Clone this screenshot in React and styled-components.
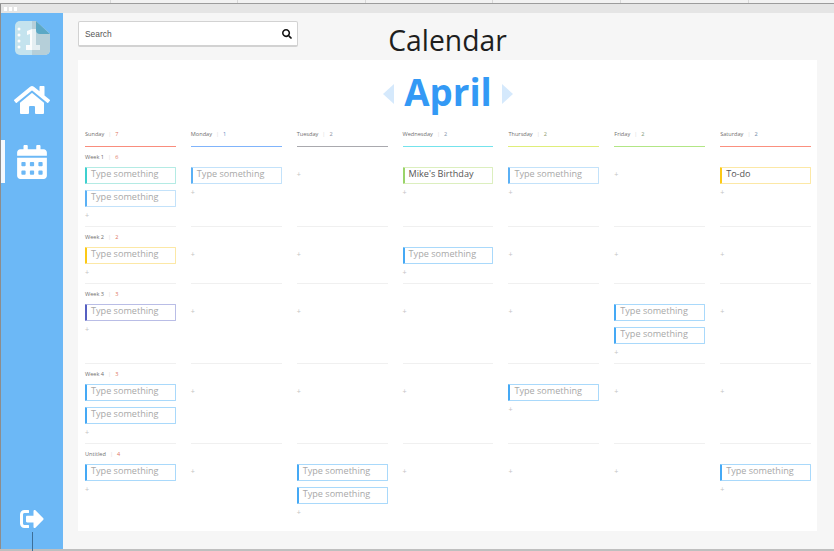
import styled, { createGlobalStyle } from 'styled-components'
import { FaHome, FaCalendarAlt, FaSignOutAlt, FaSearch } from 'react-icons/fa'

const GlobalStyle = createGlobalStyle`
* {
  box-sizing: border-box;
  margin: 0;
  padding: 0;
}
html, body, #root {
  height: 100%;
}
body {
  overflow: hidden;
  font-family: 'Open Sans', sans-serif;
  background: #f6f6f6;
}
`

const Frame = styled.div`
  position: relative;
  height: 551px;
  display: flex;
  flex-direction: column;
  border-left: 1px solid #8d8d8d;
`
const Ruler = styled.div`
  height: 4px;
  flex: none;
  margin-left: -1px;
  border-bottom: 1px solid #9c9c9c;
  background: repeating-linear-gradient(to right, #f2f2f2 0, #f2f2f2 126.6px, #d8d8d8 126.6px, #d8d8d8 127.6px) -17px 0;
`
const TitleBar = styled.div`
  height: 9px;
  flex: none;
  display: flex;
  align-items: center;
  gap: 2px;
  padding-left: 3px;
  background: #e5e5e5;
`
const Dot = styled.span`
  width: 3px;
  height: 4px;
  background: #fff;
`
const Body = styled.div`
  flex: 1;
  min-height: 0;
  display: flex;
`
const BottomEdge = styled.div`
  height: 2px;
  flex: none;
  margin-left: -1px;
  background: #bfbfbf;
`
const Sidebar = styled.nav`
  width: 62px;
  flex: none;
  display: flex;
  flex-direction: column;
  align-items: center;
  padding-top: 8px;
  background: #6cb8f6;
  color: #fff;
`
const NavItem = styled.div`
  position: relative;
  width: 100%;
  height: ${p => p.$h}px;
  margin-top: ${p => p.$mt || 0}px;
  margin-bottom: ${p => p.$mb || 0}px;
  display: flex;
  align-items: center;
  justify-content: center;
  &::before {
    content: '';
    display: ${p => (p.$active ? 'block' : 'none')};
    position: absolute;
    left: 0;
    top: 0;
    bottom: 0;
    width: 4px;
    background: #f4f9fe;
  }
`
const Spacer = styled.div`
  flex: 1;
`
const Cable = styled.div`
  position: absolute;
  left: 31px;
  top: 532px;
  bottom: 0;
  width: 1px;
  background: #3d6f99;
`
const Main = styled.main`
  flex: 1;
  min-width: 0;
  display: flex;
  flex-direction: column;
  padding: 8px 17px 18px 15px;
`
const TopRow = styled.header`
  height: 39px;
  flex: none;
  display: grid;
  grid-template-columns: 1fr auto 1fr;
  align-items: start;
`
const SearchBox = styled.div`
  width: 220px;
  height: 26px;
  display: flex;
  align-items: center;
  justify-content: space-between;
  padding: 0 5px 0 6px;
  background: #fff;
  border: 1px solid #d2d2d2;
  border-bottom-width: 2px;
  border-radius: 2px;
  font-family: 'Liberation Sans', sans-serif;
  font-size: 8.4px;
  color: #555;
  svg {
    color: #111;
  }
`
const Title = styled.h1`
  font-size: 28.3px;
  line-height: 38px;
  font-weight: 400;
  color: #1e1e1e;
`
const Panel = styled.section`
  flex: 1;
  min-height: 0;
  padding: 0 6px 0 7px;
  background: #fff;
`
const MonthRow = styled.div`
  height: 67px;
  display: flex;
  align-items: center;
  justify-content: center;
  gap: 10px;
`
const Month = styled.h2`
  font-size: 36.7px;
  line-height: 62px;
  margin-bottom: 4px;
  font-weight: 700;
  color: #3399f5;
`
const Arrow = styled.span`
  width: 0;
  height: 0;
  border-top: 10px solid transparent;
  border-bottom: 10px solid transparent;
  border-${p => (p.$right ? 'left' : 'right')}: 11px solid #d5e9fc;
`
const DayGrid = styled.div`
  display: grid;
  grid-template-columns: repeat(7, 1fr);
  column-gap: 15px;
`
const DayHead = styled.div`
  height: 20px;
  display: flex;
  align-items: flex-start;
  padding-top: 2px;
  border-bottom: 1px solid ${p => p.$color};
`
const Count = styled.div`
  display: flex;
  align-items: center;
  font-size: 5.6px;
  line-height: 11px;
  color: #6f6f6f;
  i {
    font-style: normal;
    color: #d8d8d8;
    margin: 0 4px;
  }
  b {
    font-weight: 400;
    color: ${p => p.$tone};
  }
`
const WeekLabel = styled(Count)`
  grid-column: 1 / -1;
  height: 20px;
  padding-top: 5px;
  align-items: flex-start;
`
const Cell = styled.div`
  display: flex;
  flex-direction: column;
  gap: 6px;
  border-bottom: 1px solid ${p => (p.$last ? 'transparent' : '#f0f0f0')};
`
const Card = styled.div`
  height: 17px;
  padding-left: 4px;
  background: #fff;
  border: 1px solid ${p => p.$tint};
  border-left: 2px solid ${p => p.$accent};
  border-radius: 1px;
  font-size: 9.1px;
  line-height: 11px;
  white-space: nowrap;
  color: ${p => (p.$filled ? '#555' : '#a8a8a8')};
`
const AddButton = styled.div`
  height: 18px;
  margin-top: ${p => (p.$empty ? 0 : -5)}px;
  padding-top: 3px;
  font-family: 'Liberation Sans', sans-serif;
  font-size: 7px;
  line-height: 10px;
  color: #c4c4c4;
`

const Logo = () => (
  <svg width="35" height="35" viewBox="0 0 35 35">
    <path d="M5 0H21L35 13V29a5 5 0 0 1-5 5H5a5 5 0 0 1-5-5V5a5 5 0 0 1 5-5Z" fill="#c4e3ee" />
    <path d="M17 0H21L35 13V29a5 5 0 0 1-5 5H17Z" fill="#b5cfd9" />
    <path d="M21 0L35 13H25a4 4 0 0 1-4-4Z" fill="#5ba8c5" />
    <circle cx="4" cy="8" r="1.5" fill="#fff" />
    <circle cx="4" cy="14" r="1.5" fill="#fff" />
    <circle cx="4" cy="20" r="1.5" fill="#fff" />
    <circle cx="4" cy="26" r="1.5" fill="#fff" />
    <path d="M12 10L17 8H21V24H25V29H11V24H15V13L12 14Z" fill="#fff" opacity=".92" />
    <path d="M17 8H21V24H25V29H17Z" fill="#e4eef2" />
  </svg>
)

const days = [
  ['Sunday', 7, '#f98d7d', '#e0765f'],
  ['Monday', 1, '#80b4fb', '#6c8ac4'],
  ['Tuesday', 2, '#a9a9ae', '#8a8fa5'],
  ['Wednesday', 2, '#74e3ec', '#7f93a8'],
  ['Thursday', 2, '#dfee7a', '#8f9a6e'],
  ['Friday', 2, '#b2e685', '#7f9a78'],
  ['Saturday', 2, '#fb907f', '#6f86a8'],
]

const tones = {
  blue: ['#45a9f5', '#a9d9fb'],
  sky: ['#5ab0f5', '#c3e2fa'],
  teal: ['#3ed0cf', '#b4ebe4'],
  green: ['#9ad46a', '#dcefbf'],
  yellow: ['#fcc916', '#fce8a6'],
  indigo: ['#5660c2', '#b9bde6'],
}

const PLACEHOLDER = 'Type something'

// one entry per week, keyed by column index
const weeks = [
  {
    name: 'Week 1',
    count: 6,
    cards: {
      0: [['teal'], ['sky']],
      1: [['sky']],
      3: [['green', "Mike's Birthday"]],
      4: [['sky']],
      6: [['yellow', 'To-do']],
    },
  },
  { name: 'Week 2', count: 2, cards: { 0: [['yellow']], 3: [['blue']] } },
  { name: 'Week 3', count: 3, cards: { 0: [['indigo']], 5: [['blue'], ['blue']] } },
  { name: 'Week 4', count: 3, cards: { 0: [['blue'], ['blue']], 4: [['blue']] } },
  {
    name: 'Untitled',
    count: 4,
    cards: { 0: [['blue']], 2: [['blue'], ['blue']], 6: [['blue']] },
  },
]

const App = () => {
  return (
    <Frame>
      <GlobalStyle />
      <Ruler />
      <TitleBar>
        <Dot />
        <Dot />
        <Dot />
      </TitleBar>
      <Body>
        <Sidebar>
          <Logo />
          <NavItem $h={44} $mt={22}>
            <FaHome size={36} />
          </NavItem>
          <NavItem $h={43} $mt={18} $active>
            <FaCalendarAlt size={34} />
          </NavItem>
          <Spacer />
          <NavItem $h={24} $mb={18}>
            <FaSignOutAlt size={24} />
          </NavItem>
        </Sidebar>
        <Main>
          <TopRow>
            <SearchBox>
              Search
              <FaSearch size={10} />
            </SearchBox>
            <Title>Calendar</Title>
          </TopRow>
          <Panel>
            <MonthRow>
              <Arrow />
              <Month>April</Month>
              <Arrow $right />
            </MonthRow>
            <DayGrid>
              {days.map(([name, count, color, tone]) => (
                <DayHead key={name} $color={color}>
                  <Count $tone={tone}>
                    {name}
                    <i>|</i>
                    <b>{count}</b>
                  </Count>
                </DayHead>
              ))}
            </DayGrid>
            {weeks.map((week, w) => (
              <DayGrid key={week.name}>
                <WeekLabel $tone="#e0765f">
                  {week.name}
                  <i>|</i>
                  <b>{week.count}</b>
                </WeekLabel>
                {days.map(([name], d) => {
                  const cards = week.cards[d] || []
                  return (
                    <Cell key={name} $last={w === weeks.length - 1}>
                      {cards.map(([tone, text], i) => (
                        <Card key={i} $accent={tones[tone][0]} $tint={tones[tone][1]} $filled={!!text}>
                          {text || PLACEHOLDER}
                        </Card>
                      ))}
                      <AddButton $empty={cards.length === 0}>+</AddButton>
                    </Cell>
                  )
                })}
              </DayGrid>
            ))}
          </Panel>
        </Main>
      </Body>
      <BottomEdge />
      <Cable />
    </Frame>
  )
}

export default App
